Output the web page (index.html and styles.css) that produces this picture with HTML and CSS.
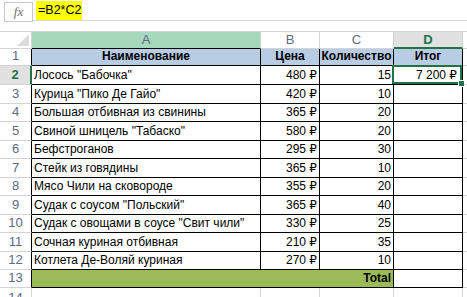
FILE: index.html
```html
<!DOCTYPE html>
<html lang="ru">
<head>
<meta charset="utf-8">
<link rel="stylesheet" href="styles.css">
</head>
<body>
<div class="fbar">
  <div class="fx">fx</div>
  <div class="finput"><span class="formula">=B2*C2</span></div>
</div>
<div class="sheet">
  <div class="corner"><svg width="12" height="12" viewBox="0 0 12 12"><path d="M12 0 L12 12 L0 12 Z" fill="#dcdcdc"/></svg></div>
  <div class="c h hsel-a">A</div>
  <div class="c h">B</div>
  <div class="c h">C</div>
  <div class="c h hsel-d">D</div>
  <div class="c h"></div>

  <div class="c n nt">1</div>
  <div class="c t ctr b blue">Наименование</div>
  <div class="c t ctr b blue">Цена</div>
  <div class="c t ctr b blue">Количество</div>
  <div class="c t ctr b blue">Итог</div>
  <div class="c"></div>

  <div class="c n nsel">2</div>
  <div class="c t">Лосось "Бабочка"</div>
  <div class="c t r">480 ₽</div>
  <div class="c t r">15</div>
  <div class="c t r sel">7 200 ₽</div>
  <div class="c"></div>

  <div class="c n nt">3</div>
  <div class="c t">Курица "Пико Де Гайо"</div>
  <div class="c t r">420 ₽</div>
  <div class="c t r">10</div>
  <div class="c t"></div>
  <div class="c"></div>

  <div class="c n nt">4</div>
  <div class="c t">Большая отбивная из свинины</div>
  <div class="c t r">365 ₽</div>
  <div class="c t r">20</div>
  <div class="c t"></div>
  <div class="c"></div>

  <div class="c n nt">5</div>
  <div class="c t">Свиной шницель "Табаско"</div>
  <div class="c t r">580 ₽</div>
  <div class="c t r">20</div>
  <div class="c t"></div>
  <div class="c"></div>

  <div class="c n nt">6</div>
  <div class="c t">Бефстроганов</div>
  <div class="c t r">295 ₽</div>
  <div class="c t r">30</div>
  <div class="c t"></div>
  <div class="c"></div>

  <div class="c n nt">7</div>
  <div class="c t">Стейк из говядины</div>
  <div class="c t r">365 ₽</div>
  <div class="c t r">10</div>
  <div class="c t"></div>
  <div class="c"></div>

  <div class="c n nt">8</div>
  <div class="c t">Мясо Чили на сковороде</div>
  <div class="c t r">355 ₽</div>
  <div class="c t r">20</div>
  <div class="c t"></div>
  <div class="c"></div>

  <div class="c n nt">9</div>
  <div class="c t">Судак с соусом "Польский"</div>
  <div class="c t r">365 ₽</div>
  <div class="c t r">40</div>
  <div class="c t"></div>
  <div class="c"></div>

  <div class="c n nt">10</div>
  <div class="c t">Судак с овощами в соусе "Свит чили"</div>
  <div class="c t r">330 ₽</div>
  <div class="c t r">25</div>
  <div class="c t"></div>
  <div class="c"></div>

  <div class="c n nt">11</div>
  <div class="c t">Сочная куриная отбивная</div>
  <div class="c t r">210 ₽</div>
  <div class="c t r">35</div>
  <div class="c t"></div>
  <div class="c"></div>

  <div class="c n nt">12</div>
  <div class="c t">Котлета Де-Воляй куриная</div>
  <div class="c t r">270 ₽</div>
  <div class="c t r">10</div>
  <div class="c t"></div>
  <div class="c"></div>

  <div class="c n nt">13</div>
  <div class="c t r b green span3">Total</div>
  <div class="c t"></div>
  <div class="c"></div>

  <div class="c n">14</div>
  <div class="c"></div>
  <div class="c"></div>
  <div class="c"></div>
  <div class="c"></div>
  <div class="c"></div>
</div>
</body>
</html>
```
FILE: styles.css
```css
html, body {
  margin: 0;
  padding: 0;
  background: #ffffff;
  height: 297px;
  overflow: hidden;
  font-family: "Liberation Sans", "DejaVu Sans", Arial, sans-serif;
}

.fbar {
  height: 31px;
  display: flex;
  align-items: flex-start;
  box-sizing: border-box;
  padding-top: 2px;
}

.fx {
  margin-left: 4px;
  width: 29px;
  height: 20px;
  box-sizing: border-box;
  border: 1px solid #c8c8c8;
  font-family: "Liberation Serif", serif;
  font-style: italic;
  font-size: 13px;
  color: #707070;
  display: flex;
  align-items: center;
  justify-content: center;
}

.finput {
  flex: 1;
  height: 20px;
  box-sizing: border-box;
  padding-left: 3px;
  margin-top: -1px;
  border-bottom: 1px solid #dadada;
  display: flex;
  align-items: flex-start;
}

.formula {
  background: #ffff00;
  font-size: 12.5px;
  line-height: 19px;
  height: 19px;
  padding: 0 1px 0 2px;
  color: #000;
}

.sheet {
  display: grid;
  grid-template-columns: 32px 229px 59px 74px 69px 1fr;
  grid-template-rows: 17px 17px 19px 19px 18px 19px 18px 19px 18px 19px 18px 19px 18px 18px 20px;
  border-top: 1px solid #d4d4d4;
  font-size: 12px;
  color: #000;
}

.c {
  box-sizing: border-box;
  border-right: 1px solid #d4d4d4;
  border-bottom: 1px solid #d4d4d4;
  display: flex;
  align-items: flex-end;
  padding: 0 2px 2px 2px;
  white-space: nowrap;
  overflow: visible;
  line-height: 14px;
}

.corner {
  box-sizing: border-box;
  border-right: 1px solid #d4d4d4;
  border-bottom: 1px solid #d4d4d4;
  display: flex;
  align-items: flex-end;
  justify-content: flex-end;
  padding: 0 2px 2px 0;
}

.h {
  justify-content: center;
  align-items: center;
  padding: 0;
  font-size: 13px;
  color: #5c6a87;
}

.hsel-a {
  background: #a6d8bb;
  border-bottom-color: #000;
}

.hsel-d {
  background: #e1e1e1;
  color: #217346;
  font-weight: bold;
  border-bottom: 2px solid #217346;
}

.n {
  justify-content: center;
  padding: 0 0 2px 0;
  font-size: 13px;
  color: #5c6a87;
}

.nt {
  border-right-color: #000;
}

.nsel {
  background: #e1e1e1;
  color: #217346;
  font-weight: bold;
  border-right: 2px solid #217346;
}

.t {
  border-right-color: #000;
  border-bottom-color: #000;
}

.r {
  justify-content: flex-end;
}

.ctr {
  justify-content: center;
}

.b {
  font-weight: bold;
}

.blue {
  background: #b8cce4;
}

.green {
  background: #9bbb59;
}

.span3 {
  grid-column: span 3;
}

.sel {
  position: relative;
  padding-right: 5px;
}

.sel::after {
  content: "";
  position: absolute;
  top: -1px;
  left: -2px;
  right: 0;
  bottom: 0;
  border: 2px solid #217346;
}

.sel::before {
  content: "";
  position: absolute;
  right: -3px;
  bottom: -3px;
  width: 5px;
  height: 5px;
  background: #217346;
  border: 1px solid #fff;
  z-index: 1;
}
```
